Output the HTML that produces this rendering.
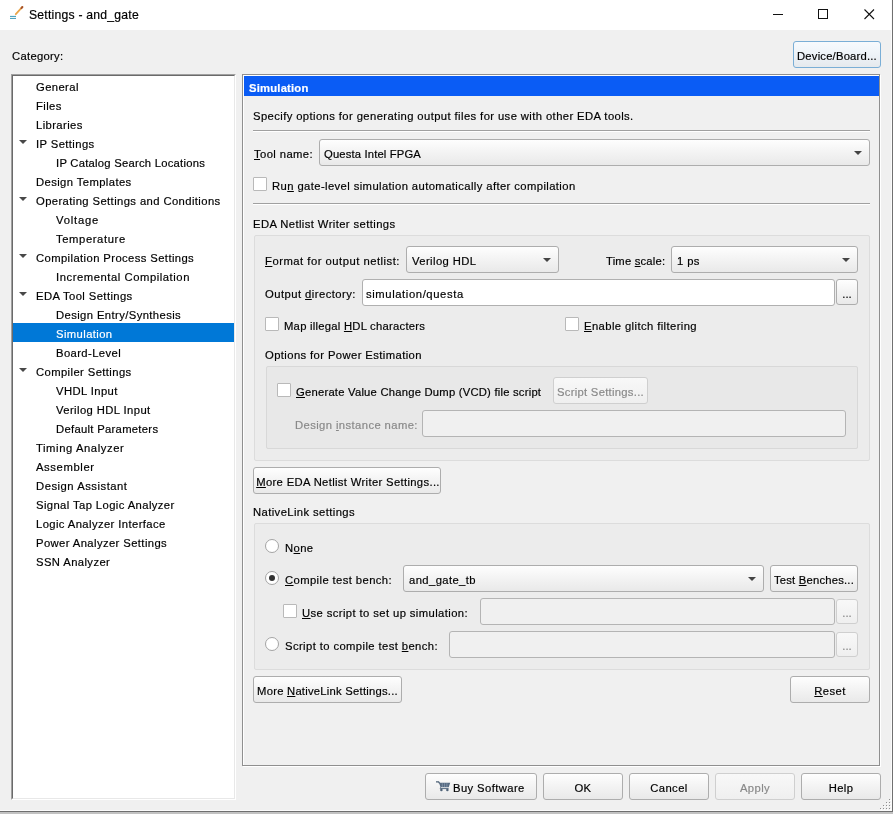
<!DOCTYPE html>
<html>
<head>
<meta charset="utf-8">
<title>Settings - and_gate</title>
<style>
html,body{margin:0;padding:0;}
body{width:893px;height:814px;overflow:hidden;background:#f0f0f0;position:relative;
  font-family:"Liberation Sans",sans-serif;font-size:11.25px;letter-spacing:0.4px;color:#000;-webkit-text-stroke:0.18px currentColor;}
*{box-sizing:border-box;}
#win{position:absolute;left:0;top:0;width:893px;height:814px;will-change:transform;background:#f0f0f0;}
.abs{position:absolute;}
.t{position:absolute;white-space:nowrap;font-size:11.25px;line-height:14px;}
u{text-decoration:underline;text-underline-offset:1px;text-decoration-thickness:1px;}
.dis{color:#898989;}
/* title bar */
#titlebar{position:absolute;left:0;top:0;width:893px;height:30px;background:#fff;}
/* tree */
#tree{position:absolute;left:11px;top:74px;width:225px;height:726px;background:#fff;
  border-top:1px solid #a0a0a0;border-left:1px solid #a0a0a0;border-right:1px solid #fff;border-bottom:1px solid #fff;}
#tree .inner{position:absolute;left:0;top:0;right:0;bottom:0;border-top:1px solid #6a6a6a;border-left:1px solid #6a6a6a;border-right:1px solid #e8e8e8;border-bottom:1px solid #e8e8e8;}
.row{position:absolute;left:13px;width:221px;height:19px;}
.row span{position:absolute;top:4px;line-height:14px;white-space:nowrap;}
.l0 span{left:23px;}
.l1 span{left:43px;}
.sel{background:#0078d7;color:#fff;}
.arr{position:absolute;left:6px;top:7px;width:0;height:0;border-left:4px solid transparent;border-right:4px solid transparent;border-top:4px solid #484848;}
/* panel */
#panel{position:absolute;left:242px;top:74px;width:638px;height:692px;border:1px solid #8f8f8f;}
#panel .hl{position:absolute;left:0;top:0;right:0;bottom:0;border:1px solid #fff;}
#hdr{position:absolute;left:244px;top:76px;width:635px;height:20px;background:#0a5cf5;}
.sep{position:absolute;height:2px;border-top:1px solid #a0a0a0;border-bottom:1px solid #fff;}
.gb{position:absolute;border:1px solid #dcdcdc;background:#ececec;border-radius:2px;}
.gb2{position:absolute;border:1px solid #d8d8d8;background:#e8e8e8;border-radius:2px;}
.btn{position:absolute;border:1px solid #adadad;border-radius:3px;background:linear-gradient(#fefefe,#f4f4f4 45%,#e9e9e9);
  text-align:center;font-size:11.25px;line-height:14px;white-space:nowrap;}
.btn span{position:absolute;left:0;right:0;}
.btn.dis{border-color:#cfcfcf;background:linear-gradient(#f8f8f8,#efefef);color:#898989;}
.combo{position:absolute;border:1px solid #adadad;border-radius:3px;background:linear-gradient(#fefefe,#f4f4f4 45%,#e9e9e9);}
.combo span{position:absolute;left:5px;white-space:nowrap;line-height:14px;}
.combo i{position:absolute;right:7px;width:0;height:0;border-left:4px solid transparent;border-right:4px solid transparent;border-top:4.5px solid #444;}
.inp{position:absolute;border:1px solid #b0b0b0;border-radius:3px;background:#fff;}
.inp.dis{background:#f0f0f0;border-color:#b4b4b4;}
.inp span{position:absolute;left:4px;white-space:nowrap;line-height:14px;}
.cb{position:absolute;width:14px;height:14px;border:1px solid #b9b9b9;background:#fff;border-radius:1px;}
.rb{position:absolute;width:14px;height:14px;border:1px solid #a4a4a4;background:#fff;border-radius:50%;}
.rb b{position:absolute;left:3px;top:3px;width:6px;height:6px;border-radius:50%;background:#333;}
</style>
</head>
<body>
<div id="win">
<!-- TITLE BAR -->
<div id="titlebar">
  <svg class="abs" style="left:8px;top:4px" width="18" height="18" viewBox="0 0 18 18">
    <line x1="7.8" y1="10.2" x2="14.2" y2="3.2" stroke="#eaa548" stroke-width="1.8" stroke-linecap="round"/>
    <line x1="13.4" y1="4.1" x2="14.4" y2="3" stroke="#a8542a" stroke-width="2" stroke-linecap="round"/>
    <line x1="2" y1="12.4" x2="8" y2="12.4" stroke="#3d9bb8" stroke-width="1"/>
    <line x1="2" y1="14.4" x2="8" y2="14.4" stroke="#3d9bb8" stroke-width="1"/>
  </svg>
  <div class="t" style="left:29px;top:8px;font-size:12.2px;line-height:15px;letter-spacing:0.22px;color:#000">Settings - and_gate</div>
  <svg class="abs" style="left:768px;top:4px" width="120" height="22" viewBox="0 0 120 22">
    <line x1="5" y1="10.5" x2="15" y2="10.5" stroke="#111" stroke-width="1"/>
    <rect x="50.5" y="5.5" width="9" height="9" fill="none" stroke="#111" stroke-width="1"/>
    <line x1="96.5" y1="5.5" x2="106" y2="15" stroke="#111" stroke-width="1.1"/>
    <line x1="106" y1="5.5" x2="96.5" y2="15" stroke="#111" stroke-width="1.1"/>
  </svg>
</div>

<div class="t" style="left:12px;top:49px;letter-spacing:0.3px">Category:</div>
<div class="btn" style="left:793px;top:41px;width:88px;height:27px;border-color:#7aaed6;background:linear-gradient(#f7fafd,#eef3f8 50%,#e5e9ed)"><span style="top:7px;letter-spacing:0.2px">Device/Board...</span></div>

<!-- TREE -->
<div id="tree"><div class="inner"></div></div>
<div id="rows">
<div class="row l0" style="top:76px"><span>General</span></div>
<div class="row l0" style="top:95px"><span>Files</span></div>
<div class="row l0" style="top:114px"><span>Libraries</span></div>
<div class="row l0" style="top:133px"><i class="arr"></i><span>IP Settings</span></div>
<div class="row l1" style="top:152px"><span style="letter-spacing:0.25px">IP Catalog Search Locations</span></div>
<div class="row l0" style="top:171px"><span>Design Templates</span></div>
<div class="row l0" style="top:190px"><i class="arr"></i><span>Operating Settings and Conditions</span></div>
<div class="row l1" style="top:209px"><span style="letter-spacing:0.8px">Voltage</span></div>
<div class="row l1" style="top:228px"><span style="letter-spacing:0.6px">Temperature</span></div>
<div class="row l0" style="top:247px"><i class="arr"></i><span>Compilation Process Settings</span></div>
<div class="row l1" style="top:266px"><span style="letter-spacing:0.55px">Incremental Compilation</span></div>
<div class="row l0" style="top:285px"><i class="arr"></i><span>EDA Tool Settings</span></div>
<div class="row l1" style="top:304px"><span>Design Entry/Synthesis</span></div>
<div class="row l1 sel" style="top:323px"><span>Simulation</span></div>
<div class="row l1" style="top:342px"><span>Board-Level</span></div>
<div class="row l0" style="top:361px"><i class="arr"></i><span>Compiler Settings</span></div>
<div class="row l1" style="top:380px"><span>VHDL Input</span></div>
<div class="row l1" style="top:399px"><span>Verilog HDL Input</span></div>
<div class="row l1" style="top:418px"><span style="letter-spacing:0.3px">Default Parameters</span></div>
<div class="row l0" style="top:437px"><span style="letter-spacing:0.58px">Timing Analyzer</span></div>
<div class="row l0" style="top:456px"><span style="letter-spacing:0.62px">Assembler</span></div>
<div class="row l0" style="top:475px"><span style="letter-spacing:0.52px">Design Assistant</span></div>
<div class="row l0" style="top:494px"><span>Signal Tap Logic Analyzer</span></div>
<div class="row l0" style="top:513px"><span>Logic Analyzer Interface</span></div>
<div class="row l0" style="top:532px"><span>Power Analyzer Settings</span></div>
<div class="row l0" style="top:551px"><span>SSN Analyzer</span></div>
</div>

<!-- PANEL -->
<div class="abs" style="left:243px;top:75px;width:638px;height:692px;border:1px solid #fff"></div>
<div id="panel"></div>
<div id="hdr"></div>
<div class="t" style="left:249px;top:81px;color:#fff;font-weight:bold;letter-spacing:0.2px">Simulation</div>

<div id="content">
<div class="t" style="left:253px;top:109px">Specify options for generating output files for use with other EDA tools.</div>
<div class="sep" style="left:253px;top:130px;width:617px"></div>

<div class="t" style="left:254px;top:147px"><u>T</u>ool name:</div>
<div class="combo" style="left:319px;top:139px;width:551px;height:27px"><span style="top:7px;left:4px;letter-spacing:0.15px">Questa Intel FPGA</span><i style="top:11px"></i></div>

<div class="cb" style="left:253px;top:177px"></div>
<div class="t" style="left:272px;top:179px">Ru<u>n</u> gate-level simulation automatically after compilation</div>
<div class="sep" style="left:253px;top:203px;width:617px"></div>

<div class="t" style="left:253px;top:217px">EDA Netlist Writer settings</div>
<div class="gb" style="left:254px;top:235px;width:616px;height:226px"></div>

<div class="t" style="left:265px;top:254px;letter-spacing:0.5px"><u>F</u>ormat for output netlist:</div>
<div class="combo" style="left:406px;top:246px;width:153px;height:27px"><span style="top:7px">Verilog HDL</span><i style="top:11px"></i></div>
<div class="t" style="left:606px;top:254px;letter-spacing:0.2px">Time <u>s</u>cale:</div>
<div class="combo" style="left:671px;top:246px;width:187px;height:27px"><span style="top:7px">1 ps</span><i style="top:11px"></i></div>

<div class="t" style="left:265px;top:287px;letter-spacing:0.45px">Output <u>d</u>irectory:</div>
<div class="inp" style="left:362px;top:279px;width:473px;height:27px"><span style="top:7px;left:3px;letter-spacing:0.6px">simulation/questa</span></div>
<div class="btn" style="left:836px;top:279px;width:22px;height:26px"><span style="top:7px;letter-spacing:0">...</span></div>

<div class="cb" style="left:265px;top:317px"></div>
<div class="t" style="left:284px;top:319px;letter-spacing:0.25px">Map illegal <u>H</u>DL characters</div>
<div class="cb" style="left:565px;top:317px"></div>
<div class="t" style="left:584px;top:319px"><u>E</u>nable glitch filtering</div>

<div class="t" style="left:265px;top:348px">Options for Power Estimation</div>
<div class="gb2" style="left:266px;top:366px;width:592px;height:83px"></div>
<div class="cb" style="left:277px;top:383px"></div>
<div class="t" style="left:296px;top:385px;letter-spacing:0.22px"><u>G</u>enerate Value Change Dump (VCD) file script</div>
<div class="btn dis" style="left:553px;top:377px;width:95px;height:27px"><span style="top:7px;letter-spacing:0.28px">Script Settings...</span></div>
<div class="t dis" style="left:295px;top:418px">Design <u>i</u>nstance name:</div>
<div class="inp dis" style="left:422px;top:410px;width:424px;height:27px"></div>

<div class="btn" style="left:253px;top:467px;width:188px;height:27px"><span style="top:7px;letter-spacing:0.34px;left:2px"><u>M</u>ore EDA Netlist Writer Settings...</span></div>

<div class="t" style="left:253px;top:505px">NativeLink settings</div>
<div class="gb" style="left:254px;top:523px;width:616px;height:147px"></div>

<div class="rb" style="left:265px;top:539px"></div>
<div class="t" style="left:285px;top:541px">N<u>o</u>ne</div>

<div class="rb" style="left:265px;top:571px"><b></b></div>
<div class="t" style="left:285px;top:573px"><u>C</u>ompile test bench:</div>
<div class="combo" style="left:403px;top:565px;width:361px;height:27px"><span style="top:7px">and_gate_tb</span><i style="top:11px"></i></div>
<div class="btn" style="left:770px;top:565px;width:88px;height:27px"><span style="top:7px;letter-spacing:0.2px">Test <u>B</u>enches...</span></div>

<div class="cb" style="left:283px;top:604px"></div>
<div class="t" style="left:302px;top:606px"><u>U</u>se script to set up simulation:</div>
<div class="inp dis" style="left:480px;top:598px;width:355px;height:27px"></div>
<div class="btn dis" style="left:836px;top:599px;width:22px;height:25px"><span style="top:6px;letter-spacing:0">...</span></div>

<div class="rb" style="left:265px;top:637px"></div>
<div class="t" style="left:285px;top:639px">Script to compile test <u>b</u>ench:</div>
<div class="inp dis" style="left:449px;top:631px;width:386px;height:27px"></div>
<div class="btn dis" style="left:836px;top:632px;width:22px;height:25px"><span style="top:6px;letter-spacing:0">...</span></div>

<div class="btn" style="left:253px;top:676px;width:149px;height:27px"><span style="top:7px;letter-spacing:0.24px">More <u>N</u>ativeLink Settings...</span></div>
<div class="btn" style="left:790px;top:676px;width:80px;height:27px"><span style="top:7px"><u>R</u>eset</span></div>
</div>

<!-- BOTTOM BUTTONS -->
<div id="bottom">
<div class="btn" style="left:425px;top:773px;width:112px;height:27px">
  <svg class="abs" style="left:10px;top:7px" width="15" height="11" viewBox="0 0 15 11">
    <path d="M0 0.9 H2.6 L3.6 2.4" fill="none" stroke="#4e6277" stroke-width="1.3"/>
    <path d="M3 1.7 H14.2 L12.7 6.3 H4.5 Z" fill="#566b82"/>
    <path d="M6.3 2.2 V6 M8.6 2.2 V6 M10.9 2.2 V6" stroke="#8fa1b4" stroke-width="0.7"/>
    <path d="M4.6 6.3 L4.2 7.6 H12.6" fill="none" stroke="#566b82" stroke-width="1"/>
    <circle cx="5.4" cy="9" r="1.25" fill="#4e6277"/><circle cx="11.4" cy="9" r="1.25" fill="#4e6277"/>
  </svg>
  <span style="top:7px;left:27px;right:auto">Buy Software</span></div>
<div class="btn" style="left:543px;top:773px;width:80px;height:27px"><span style="top:7px">OK</span></div>
<div class="btn" style="left:629px;top:773px;width:80px;height:27px"><span style="top:7px">Cancel</span></div>
<div class="btn dis" style="left:715px;top:773px;width:80px;height:27px"><span style="top:7px">Apply</span></div>
<div class="btn" style="left:801px;top:773px;width:80px;height:27px"><span style="top:7px">Help</span></div>
</div>

<!-- window border -->
<div class="abs" style="left:890px;top:800px;width:1px;height:1px;background:#fff"></div><div class="abs" style="left:889px;top:799px;width:1px;height:1px;background:#8f8f8f"></div>
<div class="abs" style="left:887px;top:803px;width:1px;height:1px;background:#fff"></div><div class="abs" style="left:886px;top:802px;width:1px;height:1px;background:#8f8f8f"></div>
<div class="abs" style="left:890px;top:803px;width:1px;height:1px;background:#fff"></div><div class="abs" style="left:889px;top:802px;width:1px;height:1px;background:#8f8f8f"></div>
<div class="abs" style="left:884px;top:806px;width:1px;height:1px;background:#fff"></div><div class="abs" style="left:883px;top:805px;width:1px;height:1px;background:#8f8f8f"></div>
<div class="abs" style="left:887px;top:806px;width:1px;height:1px;background:#fff"></div><div class="abs" style="left:886px;top:805px;width:1px;height:1px;background:#8f8f8f"></div>
<div class="abs" style="left:890px;top:806px;width:1px;height:1px;background:#fff"></div><div class="abs" style="left:889px;top:805px;width:1px;height:1px;background:#8f8f8f"></div>
<div class="abs" style="left:881px;top:809px;width:1px;height:1px;background:#fff"></div><div class="abs" style="left:880px;top:808px;width:1px;height:1px;background:#8f8f8f"></div>
<div class="abs" style="left:884px;top:809px;width:1px;height:1px;background:#fff"></div><div class="abs" style="left:883px;top:808px;width:1px;height:1px;background:#8f8f8f"></div>
<div class="abs" style="left:887px;top:809px;width:1px;height:1px;background:#fff"></div><div class="abs" style="left:886px;top:808px;width:1px;height:1px;background:#8f8f8f"></div>
<div class="abs" style="left:890px;top:809px;width:1px;height:1px;background:#fff"></div><div class="abs" style="left:889px;top:808px;width:1px;height:1px;background:#8f8f8f"></div>
<div class="abs" style="left:0;top:810px;width:893px;height:1px;background:#fbfbfb"></div>
<div class="abs" style="left:891px;top:0;width:1px;height:811px;background:#fafafa"></div>
<div class="abs" style="left:892px;top:0;width:1px;height:812px;background:#707070"></div>
<div class="abs" style="left:0;top:811px;width:893px;height:1px;background:#6f6f6f"></div>
<div class="abs" style="left:0;top:812px;width:893px;height:2px;background:#c2c2c2"></div>
</div>
</body>
</html>
